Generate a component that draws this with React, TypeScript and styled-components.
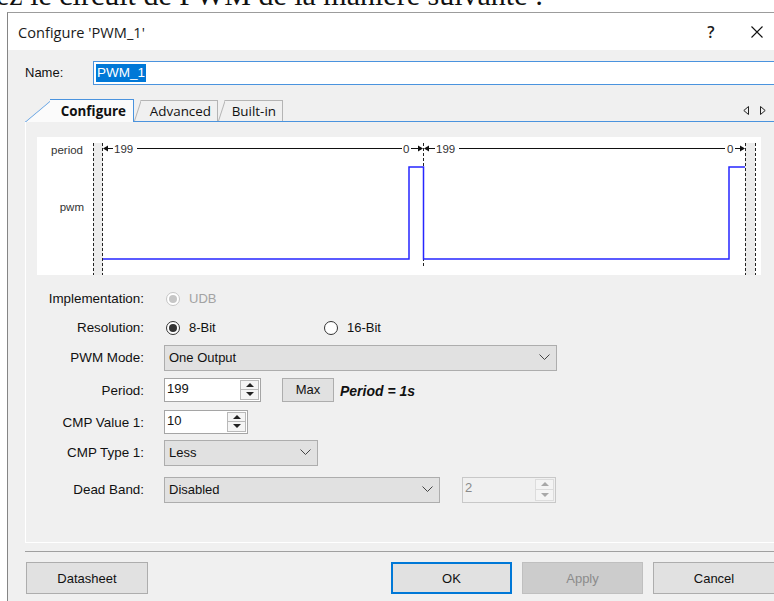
import React from 'react';
import styled, { createGlobalStyle, css } from 'styled-components';

const GlobalStyle = createGlobalStyle`
  *, *::before, *::after { box-sizing: border-box; }
  html, body { margin: 0; padding: 0; background: #fff; }
  body { width: 774px; height: 601px; overflow: hidden; }
`;

const Page = styled.div`
  width: 774px;
  height: 601px;
  overflow: hidden;
  background: #fff;
  display: flex;
  flex-direction: column;
`;

// line of the surrounding document, mostly scrolled out of view
const DocLine = styled.div`
  height: 12px;
  flex-shrink: 0;
  overflow: hidden;
  white-space: nowrap;
  font-family: 'Liberation Serif', 'Times New Roman', serif;
  font-size: 30px;
  line-height: 30px;
  color: #111;
`;

const DocText = styled.div`
  margin-top: -20px;
  margin-left: -4px;
`;

const Dialog = styled.div`
  margin-left: 7px;
  width: 800px;
  flex: 1;
  display: flex;
  flex-direction: column;
  background: #f0f0f0;
  border-top: 1px solid #9c9c9c;
  border-left: 1px solid #858585;
  font-family: 'Liberation Sans', Arial, sans-serif;
  font-size: 13px;
  color: #111;
`;

const TitleBar = styled.div`
  height: 37px;
  flex-shrink: 0;
  background: #fff;
  display: grid;
  grid-template-columns: 1fr 46px 46px;
  align-items: center;
  padding: 0 27px 0 10px;
  font-family: 'Open Sans', 'Noto Sans', sans-serif;
  font-size: 14.6px;
  color: #1a1a1a;
`;

const CaptionButton = styled.div`
  display: flex;
  justify-content: center;
  align-items: center;
  font-size: 16px;
  font-weight: 600;
`;

const NameRow = styled.div`
  height: 49px;
  flex-shrink: 0;
  display: flex;
  align-items: flex-start;
  padding: 11px 0 0 17px;
`;

const NameLabel = styled.div`
  width: 68px;
  line-height: 24px;
`;

const NameInput = styled.div`
  flex: 1;
  height: 24px;
  background: #fff;
  border: 1px solid #4a93de;
  display: flex;
  align-items: center;
  padding-left: 2px;
`;

const Selection = styled.span`
  background: #0078d7;
  color: #fff;
  line-height: 18px;
  padding: 0 1px;
  font-size: 13.5px;
`;

const TabStrip = styled.div`
  height: 22px;
  flex-shrink: 0;
  display: flex;
  align-items: flex-end;
  padding: 0 41px 0 17px;
  font-family: 'Open Sans', 'Noto Sans', sans-serif;
  font-size: 13.4px;
  position: relative;
  z-index: 1;
`;

const Tab = styled.div<{ $active?: boolean; $w: number }>`
  position: relative;
  width: ${(p) => p.$w}px;
  height: ${(p) => (p.$active ? 23 : 21)}px;
  margin-bottom: ${(p) => (p.$active ? -1 : 0)}px;
  display: flex;
  align-items: center;
  justify-content: flex-end;
  padding-right: ${(p) => (p.$active ? 8 : 7)}px;
  font-weight: ${(p) => (p.$active ? 700 : 400)};
  color: #111;

  &::before {
    content: '';
    position: absolute;
    left: 0;
    top: 0;
    bottom: 0;
    width: 40px;
    transform-origin: bottom left;
    transform: skewX(${(p) => (p.$active ? -50 : -18)}deg);
    border-top: 1px solid ${(p) => (p.$active ? '#4a93de' : '#b4b4b4')};
    border-left: 1px solid ${(p) => (p.$active ? '#4a93de' : '#b4b4b4')};
    background: ${(p) => (p.$active ? '#fbfbfb' : '#f0f0f0')};
  }

  &::after {
    content: '';
    position: absolute;
    left: ${(p) => (p.$active ? 25 : 7)}px;
    right: 0;
    top: 0;
    bottom: 0;
    border-top: 1px solid ${(p) => (p.$active ? '#4a93de' : '#b4b4b4')};
    border-right: 1px solid ${(p) => (p.$active ? '#4a93de' : '#b4b4b4')};
    background: ${(p) => (p.$active ? '#fbfbfb' : '#f0f0f0')};
  }

  span {
    position: relative;
    z-index: 1;
  }
`;

const TabArrows = styled.div`
  margin-left: auto;
  align-self: center;
  display: flex;
  gap: 11px;
  padding-top: 1px;
`;

const Panel = styled.div`
  margin-left: 17px;
  width: 753px;
  height: 422px;
  flex-shrink: 0;
  border-top: 1px solid #4a93de;
  border-left: 1px solid #fff;
  border-bottom: 1px solid #fff;
  padding-top: 15px;
`;

const Canvas = styled.div`
  margin-left: 11px;
  width: 724px;
  height: 138px;
  background: #fff;
  svg {
    display: block;
  }
`;

const Form = styled.div`
  margin-top: 9px;
  display: grid;
  grid-template-columns: 118px 1fr;
  grid-template-rows: 29px 29px 31px 35px 29px 31px 43px;
  column-gap: 20px;
  align-items: center;
`;

const Label = styled.div`
  text-align: right;
  font-size: 13.4px;
`;

const Controls = styled.div`
  display: flex;
  align-items: center;
`;

const RadioItem = styled.div<{ $w?: number; $disabled?: boolean }>`
  width: ${(p) => (p.$w ? `${p.$w}px` : 'auto')};
  display: flex;
  align-items: center;
  gap: 9px;
  padding-left: 2px;
  color: ${(p) => (p.$disabled ? '#a3a3a3' : '#111')};
`;

const RadioDot = styled.span<{ $checked?: boolean; $disabled?: boolean }>`
  width: 14px;
  height: 14px;
  border-radius: 50%;
  border: 1px solid ${(p) => (p.$disabled ? '#c6c6c6' : '#333')};
  background: #fff;
  display: flex;
  align-items: center;
  justify-content: center;

  ${(p) =>
    p.$checked &&
    css`
      &::after {
        content: '';
        width: 8px;
        height: 8px;
        border-radius: 50%;
        background: ${p.$disabled ? '#c6c6c6' : '#333'};
      }
    `}
`;

const Select = styled.div<{ $w: number }>`
  width: ${(p) => p.$w}px;
  height: 26px;
  background: #e1e1e1;
  border: 1px solid #adadad;
  display: flex;
  align-items: center;
  justify-content: space-between;
  padding: 0 6px 0 4px;
`;

const SpinBox = styled.div<{ $w: number; $disabled?: boolean; $ml?: number }>`
  width: ${(p) => p.$w}px;
  height: ${(p) => (p.$disabled ? 26 : 24)}px;
  margin-left: ${(p) => p.$ml || 0}px;
  margin-top: ${(p) => (p.$disabled ? 0 : -2)}px;
  background: ${(p) => (p.$disabled ? '#f0f0f0' : '#fff')};
  border: 1px solid ${(p) => (p.$disabled ? '#c8c8c8' : '#a5a5a5')};
  display: flex;
  align-items: stretch;
  color: ${(p) => (p.$disabled ? '#8a8a8a' : '#111')};
`;

const SpinValue = styled.div`
  flex: 1;
  padding: 1px 0 0 2px;
  line-height: 17px;
`;

const SpinArrows = styled.div<{ $disabled?: boolean }>`
  width: 19px;
  margin: 1px;
  border: 1px solid ${(p) => (p.$disabled ? '#dcdcdc' : '#b9b9b9')};
  background: ${(p) => (p.$disabled ? '#f4f4f4' : '#f5f5f5')};
  display: flex;
  flex-direction: column;
`;

const SpinHalf = styled.div<{ $down?: boolean; $disabled?: boolean }>`
  flex: 1;
  display: flex;
  align-items: center;
  justify-content: center;
  ${(p) => p.$down && `border-top: 1px solid ${p.$disabled ? '#dcdcdc' : '#b9b9b9'};`}

  &::after {
    content: '';
    border-left: 4px solid transparent;
    border-right: 4px solid transparent;
    ${(p) => (p.$down ? 'border-top' : 'border-bottom')}: 4px solid ${(p) =>
      p.$disabled ? '#a8a8a8' : '#222'};
  }
`;

const Button = styled.div<{ $variant?: 'primary' | 'disabled'; $ml?: number }>`
  width: ${(p) => (p.$variant ? 121 : 122)}px;
  height: 32px;
  margin-left: ${(p) => p.$ml || 0}px;
  display: flex;
  align-items: center;
  justify-content: center;
  background: #e1e1e1;
  border: 1px solid #adadad;
  color: #111;

  ${(p) =>
    p.$variant === 'primary' &&
    css`
      border: 2px solid #0078d7;
    `}
  ${(p) =>
    p.$variant === 'disabled' &&
    css`
      background: #cccccc;
      border-color: #bfbfbf;
      color: #8b8b8b;
    `}
`;

const SmallButton = styled(Button)`
  width: 52px;
  height: 24px;
  margin-top: -2px;
`;

const PeriodNote = styled.div`
  margin-left: 6px;
  font-weight: 700;
  font-style: italic;
  font-size: 14px;
`;

const Separator = styled.div`
  margin: 8px 0 0 17px;
  border-top: 1px solid #a0a0a0;
  flex-shrink: 0;
`;

const ButtonRow = styled.div`
  margin-top: 10px;
  padding-left: 18px;
  display: flex;
  flex-shrink: 0;
`;

const Chevron = () => (
  <svg width="11" height="7" viewBox="0 0 11 7">
    <polyline points="0.5,0.5 5.5,5.5 10.5,0.5" fill="none" stroke="#444" strokeWidth="1" />
  </svg>
);

const CloseIcon = () => (
  <svg width="12" height="12" viewBox="0 0 12 12">
    <path d="M0.5 0.5 L11.5 11.5 M11.5 0.5 L0.5 11.5" stroke="#111" strokeWidth="1.1" />
  </svg>
);

const ArrowLeftIcon = () => (
  <svg width="6" height="9" viewBox="0 0 6 9">
    <polygon points="5.5,0.5 0.8,4.5 5.5,8.5" fill="none" stroke="#222" strokeWidth="1" />
  </svg>
);

const ArrowRightIcon = () => (
  <svg width="6" height="9" viewBox="0 0 6 9">
    <polygon points="0.5,0.5 5.2,4.5 0.5,8.5" fill="none" stroke="#222" strokeWidth="1" />
  </svg>
);

// timing diagram: one period bar and the pwm output over two cycles
const Waveform = () => {
  const dash = { stroke: '#222', strokeWidth: 1, strokeDasharray: '3 2' };
  const txt = { fontFamily: "'Liberation Sans', Arial, sans-serif", fontSize: 11.5, fill: '#333' };
  const y = 11.5;
  return (
    <svg width="724" height="138" viewBox="0 0 724 138">
      <rect x="56" y="6" width="10" height="132" fill="#ececec" />
      <rect x="708" y="6" width="10" height="132" fill="#ececec" />
      <line x1="56.5" y1="6" x2="56.5" y2="138" {...dash} />
      <line x1="65.5" y1="6" x2="65.5" y2="138" {...dash} />
      <line x1="386.5" y1="6" x2="386.5" y2="131" {...dash} />
      <line x1="708.5" y1="6" x2="708.5" y2="138" {...dash} />
      <line x1="718.5" y1="6" x2="718.5" y2="138" {...dash} />

      <text x="46" y="17" textAnchor="end" {...txt}>period</text>
      <text x="47" y="74" textAnchor="end" {...txt}>pwm</text>

      <polygon points={`66,${y} 71,${y - 3} 71,${y + 3}`} fill="#111" />
      <line x1="70" y1={y} x2="76" y2={y} stroke="#111" />
      <text x="77" y="16" {...txt}>199</text>
      <line x1="100" y1={y} x2="365" y2={y} stroke="#111" />
      <text x="366" y="16" {...txt}>0</text>
      <line x1="374" y1={y} x2="381" y2={y} stroke="#111" />
      <polygon points={`386,${y} 381,${y - 3} 381,${y + 3}`} fill="#111" />

      <polygon points={`387,${y} 392,${y - 3} 392,${y + 3}`} fill="#111" />
      <line x1="391" y1={y} x2="398" y2={y} stroke="#111" />
      <text x="399" y="16" {...txt}>199</text>
      <line x1="422" y1={y} x2="688" y2={y} stroke="#111" />
      <text x="690" y="16" {...txt}>0</text>
      <line x1="698" y1={y} x2="703" y2={y} stroke="#111" />
      <polygon points={`708,${y} 703,${y - 3} 703,${y + 3}`} fill="#111" />

      <polyline
        points="66,122 372,122 372,30 386.5,30 386.5,122 692,122 692,30 708,30"
        fill="none"
        stroke="#2626ff"
        strokeWidth="1.5"
      />
    </svg>
  );
};

const Spin = ({ value, w, disabled, ml }: { value: string; w: number; disabled?: boolean; ml?: number }) => (
  <SpinBox $w={w} $disabled={disabled} $ml={ml}>
    <SpinValue>{value}</SpinValue>
    <SpinArrows $disabled={disabled}>
      <SpinHalf $disabled={disabled} />
      <SpinHalf $down $disabled={disabled} />
    </SpinArrows>
  </SpinBox>
);

const Dropdown = ({ value, w }: { value: string; w: number }) => (
  <Select $w={w}>
    <span>{value}</span>
    <Chevron />
  </Select>
);

export default function App() {
  return (
    <Page>
      <GlobalStyle />
      <DocLine>
        <DocText>ez le circuit de PWM de la manière suivante :</DocText>
      </DocLine>
      <Dialog>
        <TitleBar>
          <span>Configure 'PWM_1'</span>
          <CaptionButton>?</CaptionButton>
          <CaptionButton>
            <CloseIcon />
          </CaptionButton>
        </TitleBar>

        <NameRow>
          <NameLabel>Name:</NameLabel>
          <NameInput>
            <Selection>PWM_1</Selection>
          </NameInput>
        </NameRow>

        <TabStrip>
          <Tab $active $w={109}>
            <span>Configure</span>
          </Tab>
          <Tab $w={84}>
            <span>Advanced</span>
          </Tab>
          <Tab $w={65}>
            <span>Built-in</span>
          </Tab>
          <TabArrows>
            <ArrowLeftIcon />
            <ArrowRightIcon />
          </TabArrows>
        </TabStrip>

        <Panel>
          <Canvas>
            <Waveform />
          </Canvas>

          <Form>
            <Label>Implementation:</Label>
            <Controls>
              <RadioItem $disabled>
                <RadioDot $checked $disabled />
                UDB
              </RadioItem>
            </Controls>

            <Label>Resolution:</Label>
            <Controls>
              <RadioItem $w={158}>
                <RadioDot $checked />
                8-Bit
              </RadioItem>
              <RadioItem>
                <RadioDot />
                16-Bit
              </RadioItem>
            </Controls>

            <Label>PWM Mode:</Label>
            <Controls>
              <Dropdown value="One Output" w={393} />
            </Controls>

            <Label>Period:</Label>
            <Controls>
              <Spin value="199" w={97} />
              <SmallButton $ml={21}>Max</SmallButton>
              <PeriodNote>Period = 1s</PeriodNote>
            </Controls>

            <Label>CMP Value 1:</Label>
            <Controls>
              <Spin value="10" w={84} />
            </Controls>

            <Label>CMP Type 1:</Label>
            <Controls>
              <Dropdown value="Less" w={154} />
            </Controls>

            <Label>Dead Band:</Label>
            <Controls>
              <Dropdown value="Disabled" w={276} />
              <Spin value="2" w={94} disabled ml={22} />
            </Controls>
          </Form>
        </Panel>

        <Separator />

        <ButtonRow>
          <Button>Datasheet</Button>
          <Button $variant="primary" $ml={243}>
            OK
          </Button>
          <Button $variant="disabled" $ml={10}>
            Apply
          </Button>
          <Button $ml={10}>Cancel</Button>
        </ButtonRow>
      </Dialog>
    </Page>
  );
}
